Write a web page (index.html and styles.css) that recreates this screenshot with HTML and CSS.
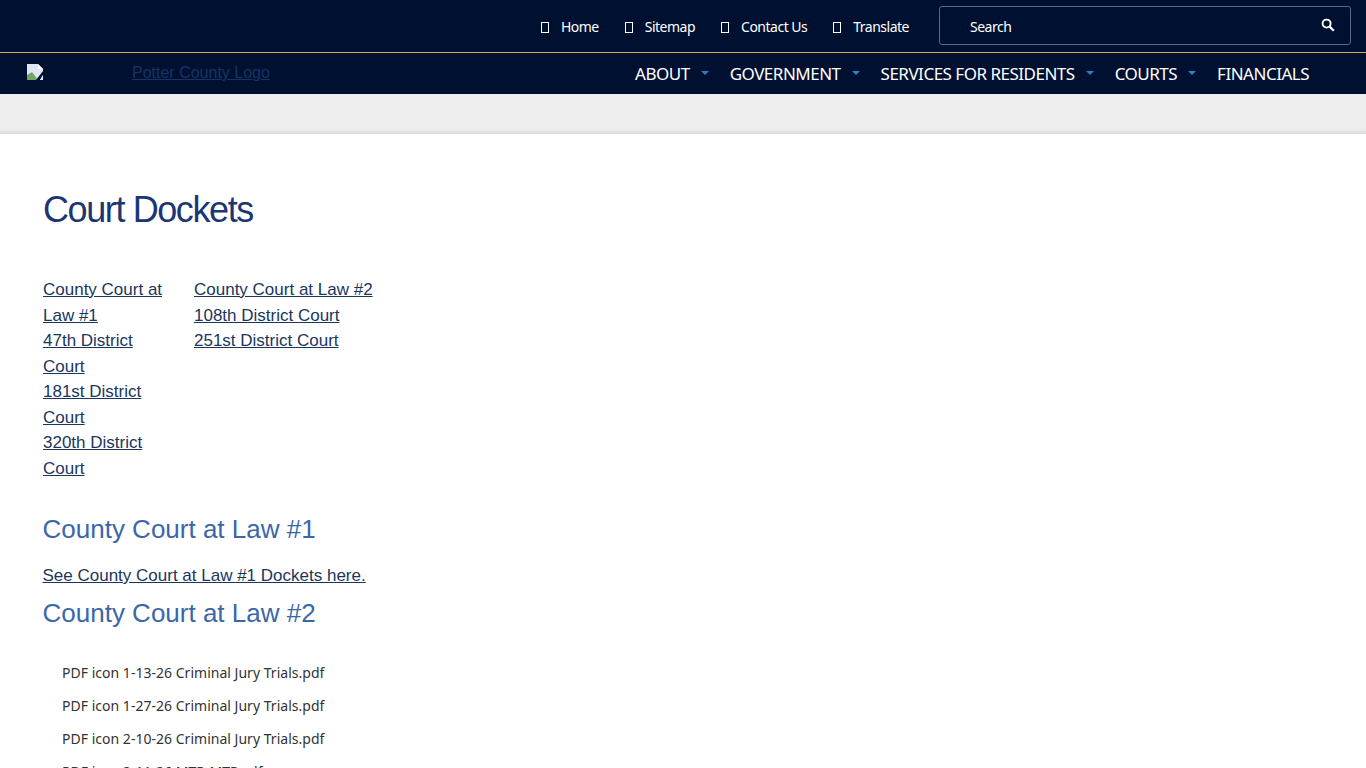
FILE: index.html
```html
<!DOCTYPE html>
<html lang="en">
<head>
<meta charset="utf-8">
<title>Court Dockets | Potter County</title>
<link rel="stylesheet" href="styles.css">
</head>
<body>
<header class="header">
  <div class="topbar">
    <nav class="toplinks">
      <a href="#"><span class="tofu"></span>Home</a>
      <a href="#"><span class="tofu"></span>Sitemap</a>
      <a href="#"><span class="tofu"></span>Contact Us</a>
      <a href="#"><span class="tofu"></span>Translate</a>
    </nav>
    <div class="search">
      <span class="search-label">Search</span>
      <svg class="search-icon" viewBox="0 0 14 14" width="14" height="14"><circle cx="5.6" cy="5.6" r="4" fill="none" stroke="#fff" stroke-width="1.9"/><path d="M8.6 8.6 L12.8 12.8" stroke="#fff" stroke-width="2.2"/></svg>
    </div>
  </div>
  <div class="mainbar">
    <a class="logo" href="#">
      <svg class="broken" viewBox="0 0 16 16" width="16" height="16"><path d="M0 0H11L16 5V16H0Z" fill="#dfe6f4"/><path d="M11 0L16 5H11Z" fill="#fff"/><path d="M0 16V11L5 8L11 16Z" fill="#6fa864"/><path d="M9 16L16 7V11L13 16Z" fill="#001030"/><path d="M13 16L16 11V16Z" fill="#e8f0ff"/></svg>
      <span class="logo-alt">Potter County Logo</span>
    </a>
    <nav class="mainnav">
      <a href="#">ABOUT<i class="caret"></i></a>
      <a href="#">GOVERNMENT<i class="caret"></i></a>
      <a href="#">SERVICES FOR RESIDENTS<i class="caret"></i></a>
      <a href="#">COURTS<i class="caret"></i></a>
      <a href="#">FINANCIALS</a>
    </nav>
  </div>
</header>
<div class="band"></div>
<main class="content">
  <h1>Court Dockets</h1>
  <div class="court-links">
    <div class="col-a">
      <a href="#">County Court at Law #1</a><br>
      <a href="#">47th District Court</a><br>
      <a href="#">181st District Court</a><br>
      <a href="#">320th District Court</a>
    </div>
    <div class="col-b">
      <a href="#">County Court at Law #2</a><br>
      <a href="#">108th District Court</a><br>
      <a href="#">251st District Court</a>
    </div>
  </div>
  <h2 class="first">County Court at Law #1</h2>
  <p class="see"><a href="#">See County Court at Law #1 Dockets here.</a></p>
  <h2>County Court at Law #2</h2>
  <ul class="files">
    <li>PDF icon 1-13-26 Criminal Jury Trials.pdf</li>
    <li>PDF icon 1-27-26 Criminal Jury Trials.pdf</li>
    <li>PDF icon 2-10-26 Criminal Jury Trials.pdf</li>
    <li>PDF icon 2-11-26 MTR-MTP.pdf</li>
  </ul>
</main>
</body>
</html>
```

FILE: styles.css
```css
html, body { margin: 0; padding: 0; height: 768px; overflow: hidden; background: #fff; }
body { font-family: "Liberation Sans", Arial, sans-serif; font-size: 17px; line-height: 25.5px; color: #212529; }
a { color: #1b365d; }

.header { background: #001030; }
.topbar { height: 52px; display: flex; justify-content: flex-end; align-items: center; border-bottom: 1px solid #c4b75a; padding-right: 15px; }
.toplinks { display: flex; gap: 26px; margin-right: 30px; margin-top: 2px; }
.toplinks a { color: #fff; text-decoration: none; font: 14px/20px "Noto Sans", "Open Sans", sans-serif; letter-spacing: -0.5px; display: flex; align-items: center; }
.tofu { width: 6px; height: 9px; border: 1px solid #fff; margin-right: 12px; display: inline-block; }
.search { width: 412px; height: 39px; box-sizing: border-box; border: 1px solid #5b6b85; border-radius: 3px; display: flex; justify-content: space-between; align-items: center; padding: 0 15px 0 30px; color: #fff; font: 14px/20px "Noto Sans", "Open Sans", sans-serif; letter-spacing: -0.5px; margin-bottom: 1px; }
.search-label { margin-top: 3px; }
.search-icon { margin-top: -2px; }

.mainbar { height: 41px; display: flex; justify-content: space-between; padding-left: 27px; }
.logo { display: flex; align-items: flex-start; text-decoration: none; padding-top: 11px; }
.broken { display: block; }
.logo-alt { margin-left: 89px; font-size: 16px; line-height: 18px; text-decoration: underline; color: #173466; }
.mainnav { display: flex; gap: 21px; padding-right: 57px; align-items: center; }
.mainnav a { color: #fff; text-decoration: none; font: 17px/24px "Noto Sans", "Open Sans", sans-serif; letter-spacing: -0.5px; display: flex; align-items: center; }
.caret { width: 0; height: 0; border-left: 4px solid transparent; border-right: 4px solid transparent; border-top: 4px solid #2a80b9; margin-left: 11px; margin-top: -2px; }

.band { height: 40px; background: #eee; box-shadow: inset 0 -5px 4px -3px rgba(0,0,0,.1); }

.content { padding: 0 43px; }
h1 { margin: 0; padding-top: 54px; font-size: 36px; line-height: 43px; font-weight: 400; color: #1b3673; letter-spacing: -1.4px; }
.court-links { display: flex; gap: 31px; margin-top: 46px; }
.col-a { width: 120px; }
.col-b { width: 200px; }
h2 { margin: 0 0 0 -0.5px; font-size: 26px; line-height: 31px; font-weight: 400; color: #3b67a9; }
h2.first { margin-top: 33px; }
.see { margin: 18px 0 0 -0.5px; }
.see + h2 { margin-top: 9px; }
.files { list-style: none; margin: 34px 0 0; padding: 0 0 0 19px; font: 14px/20px "Noto Sans", "Open Sans", sans-serif; letter-spacing: 0.02px; color: #333; }
.files li { height: 33px; }
```
